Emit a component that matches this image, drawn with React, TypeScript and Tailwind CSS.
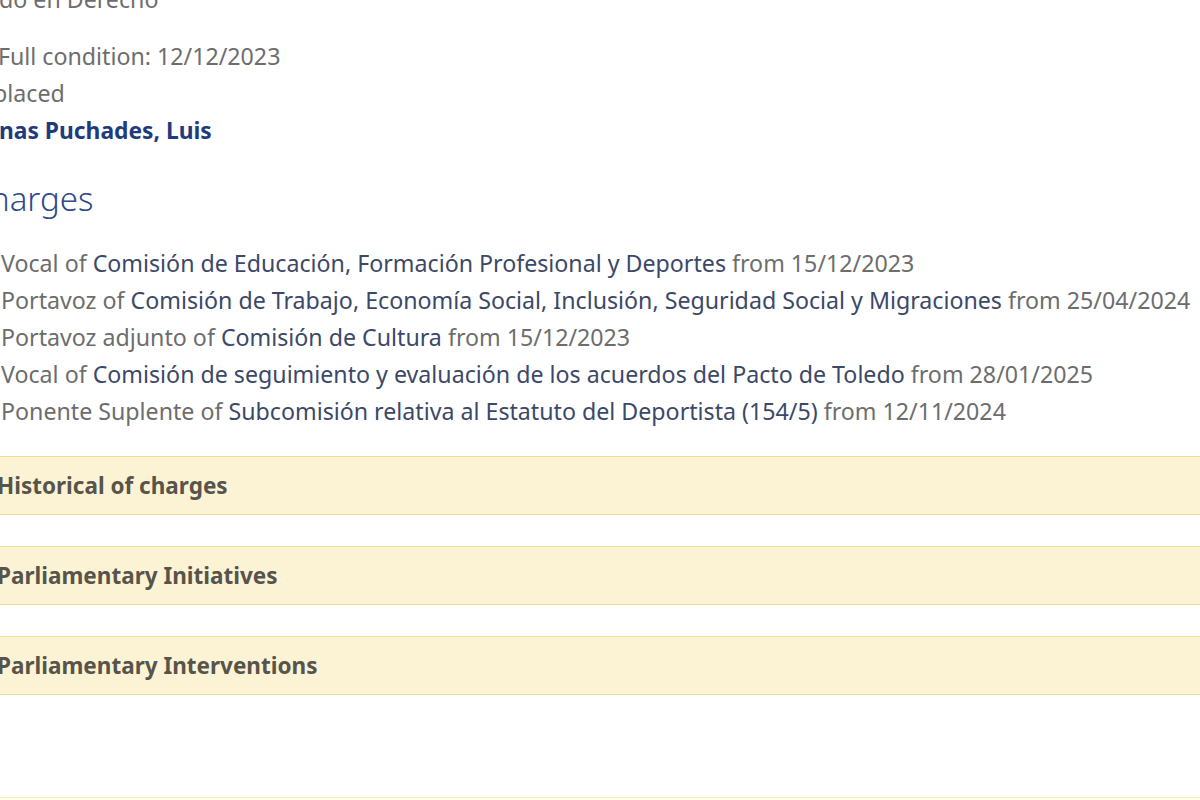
import { ChevronDown } from 'lucide-react'

const charges = [
  { role: 'Vocal', body: 'Comisión de Educación, Formación Profesional y Deportes', from: '15/12/2023' },
  { role: 'Portavoz', body: 'Comisión de Trabajo, Economía Social, Inclusión, Seguridad Social y Migraciones', from: '25/04/2024' },
  { role: 'Portavoz adjunto', body: 'Comisión de Cultura', from: '15/12/2023' },
  { role: 'Vocal', body: 'Comisión de seguimiento y evaluación de los acuerdos del Pacto de Toledo', from: '28/01/2025' },
  { role: 'Ponente Suplente', body: 'Subcomisión relativa al Estatuto del Deportista (154/5)', from: '12/11/2024' },
]

const sections = ['Historical of charges', 'Parliamentary Initiatives', 'Parliamentary Interventions']

function Section({ title }: { title: string }) {
  return (
    <div className="-mx-4 h-[59px] flex items-center justify-between border-y border-[#e9df98] bg-[#fcf3d4] pl-[13px] pr-6">
      <span className="text-[22.5px] font-bold text-[#57544b]">{title}</span>
      <ChevronDown className="hidden" />
    </div>
  )
}

export default function App() {
  return (
    <div
      className="w-[1200px] h-[800px] overflow-hidden bg-white"
      style={{ fontFamily: '"Noto Sans", "Open Sans", Arial, sans-serif' }}
    >
      <div className="-mt-[19px] text-[23.2px] leading-[37px] text-[#6d6d6d]">
        <p className="-ml-[1px] whitespace-nowrap">do en Derecho</p>
        <div className="mt-[20px] whitespace-nowrap">
          <p className="-ml-[2px]">Full condition: 12/12/2023</p>
          <p className="-ml-[7px]">placed</p>
          <p className="-ml-[1px] font-bold text-[22.8px] text-[#1f3b7d]">nas Puchades, Luis</p>
        </div>
        <h2 className="mt-[28px] -ml-[10px] text-[33px] leading-[44px] font-light text-[#2d4a8a]">harges</h2>
        <ul className="mt-[24px] pl-[1px] whitespace-nowrap">
          {charges.map(c => (
            <li key={c.body}>
              {c.role} of <a className="text-[#3c4868]">{c.body}</a> from {c.from}
            </li>
          ))}
        </ul>
        <div className="mt-[26px] flex flex-col gap-[31px]">
          {sections.map(s => <Section key={s} title={s} />)}
        </div>
        <div className="mt-[102px] -mx-4 border-t border-[#f6efb0] h-4 bg-[#fffdf0]" />
      </div>
    </div>
  )
}
